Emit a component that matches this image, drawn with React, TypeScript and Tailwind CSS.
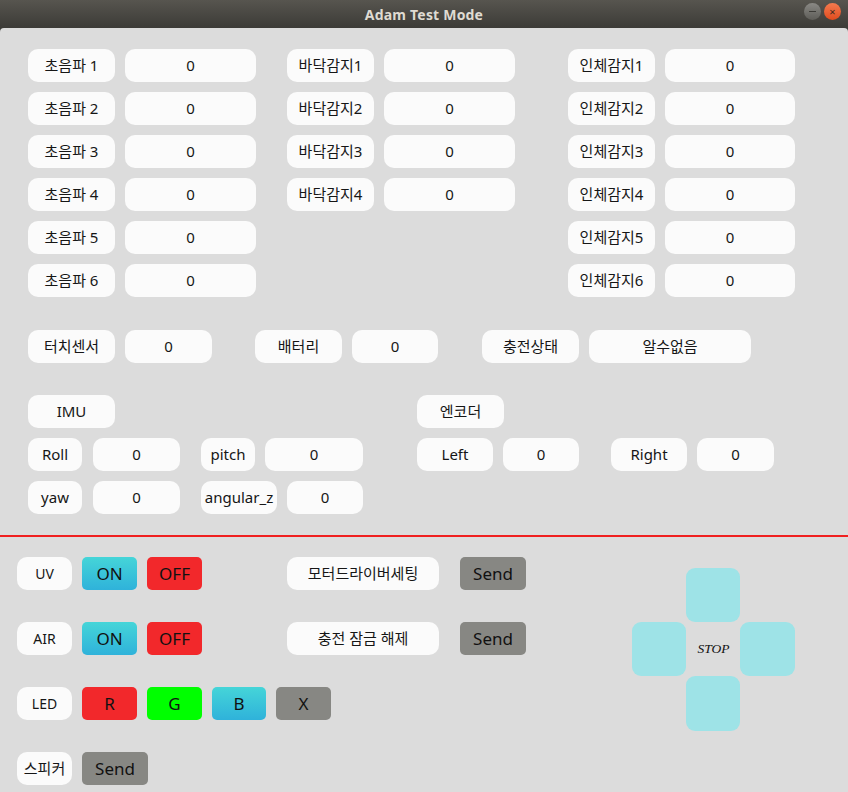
import React from 'react'

const font = { fontFamily: '"Noto Sans", "Noto Sans CJK KR", sans-serif' }

function Box({ w, children, className = '' }: { w: string; children: React.ReactNode; className?: string }) {
  return (
    <div className={`${w} h-[33px] shrink-0 rounded-[10px] bg-[#fbfbfb] flex items-center justify-center text-[15px] text-[#161616] ${className}`}>
      {children}
    </div>
  )
}

function Btn({ w, bg, children }: { w: string; bg: string; children: React.ReactNode }) {
  return (
    <div className={`${w} ${bg} h-[33px] shrink-0 rounded-[5px] flex items-center justify-center text-[17px] text-[#111]`}>
      {children}
    </div>
  )
}

const cyan = 'bg-gradient-to-b from-[#45d5d8] to-[#2fb2da]'
const red = 'bg-[#f2282b]'
const grey = 'bg-[#878783]'

export default function App() {
  const ultra = [1, 2, 3, 4, 5, 6]
  const floor = [1, 2, 3, 4]
  const human = [1, 2, 3, 4, 5, 6]

  return (
    <div className="w-[848px] h-[792px] bg-[#3d3c38] flex flex-col overflow-hidden" style={font}>
      {/* title bar */}
      <div className="h-[28px] shrink-0 relative flex items-center justify-center bg-gradient-to-b from-[#57554f] to-[#3c3b37]">
        <span className="text-[14px] font-bold text-[#dfdbd2] tracking-[0.2px]">Adam Test Mode</span>
        <div className="absolute right-[7px] top-[3px] flex gap-[3px]">
          <div className="w-[17px] h-[17px] rounded-full bg-gradient-to-b from-[#8a8985] to-[#5e5d58] flex items-center justify-center">
            <div className="w-[7px] h-[1.5px] bg-[#3c3b37]" />
          </div>
          <div className="w-[17px] h-[17px] rounded-full bg-gradient-to-b from-[#f47a4e] to-[#df4b1c] flex items-center justify-center text-[11px] leading-none text-[#3c2a20]">
            ×
          </div>
        </div>
      </div>

      <div className="flex-1 bg-[#dcdcdc] rounded-tl-[4px] rounded-tr-[4px] flex flex-col">
        {/* top sensors */}
        <div className="pt-[21px] pl-[28px] flex">
          <div className="flex flex-col gap-[10px] w-[228px]">
            {ultra.map((n) => (
              <div key={n} className="flex gap-[10px]">
                <Box w="w-[87px]">초음파 {n}</Box>
                <Box w="w-[131px]">0</Box>
              </div>
            ))}
          </div>
          <div className="flex flex-col gap-[10px] w-[228px] ml-[31px]">
            {floor.map((n) => (
              <div key={n} className="flex gap-[10px]">
                <Box w="w-[87px]">바닥감지{n}</Box>
                <Box w="w-[131px]">0</Box>
              </div>
            ))}
          </div>
          <div className="flex flex-col gap-[10px] ml-[53px]">
            {human.map((n) => (
              <div key={n} className="flex gap-[10px]">
                <Box w="w-[87px]">인체감지{n}</Box>
                <Box w="w-[130px]">0</Box>
              </div>
            ))}
          </div>
        </div>

        {/* touch / battery / charge */}
        <div className="mt-[33px] pl-[28px] flex">
          <Box w="w-[87px]">터치센서</Box>
          <Box w="w-[87px]" className="ml-[10px]">0</Box>
          <Box w="w-[87px]" className="ml-[43px]">배터리</Box>
          <Box w="w-[86px]" className="ml-[10px]">0</Box>
          <Box w="w-[97px]" className="ml-[44px]">충전상태</Box>
          <Box w="w-[162px]" className="ml-[10px]">알수없음</Box>
        </div>

        {/* IMU / encoder */}
        <div className="mt-[32px] pl-[28px] flex">
          <div className="flex flex-col gap-[10px] w-[335px]">
            <Box w="w-[87px]">IMU</Box>
            <div className="flex">
              <Box w="w-[54px]">Roll</Box>
              <Box w="w-[87px]" className="ml-[11px]">0</Box>
              <Box w="w-[54px]" className="ml-[21px]">pitch</Box>
              <Box w="w-[98px]" className="ml-[10px]">0</Box>
            </div>
            <div className="flex">
              <Box w="w-[54px]">yaw</Box>
              <Box w="w-[87px]" className="ml-[11px]">0</Box>
              <Box w="w-[76px]" className="ml-[21px]">angular_z</Box>
              <Box w="w-[76px]" className="ml-[10px]">0</Box>
            </div>
          </div>
          <div className="flex flex-col gap-[10px] ml-[54px]">
            <Box w="w-[87px]">엔코더</Box>
            <div className="flex">
              <Box w="w-[76px]">Left</Box>
              <Box w="w-[76px]" className="ml-[10px]">0</Box>
              <Box w="w-[76px]" className="ml-[32px]">Right</Box>
              <Box w="w-[77px]" className="ml-[10px]">0</Box>
            </div>
          </div>
        </div>

        <div className="mt-[21px] h-[2px] bg-[#f02020]" />

        {/* controls */}
        <div className="mt-[20px] pl-[17px] flex">
          <div className="flex flex-col gap-[32px] w-[270px]">
            <div className="flex gap-[10px]">
              <Box w="w-[55px]" className="!text-[14px]">UV</Box>
              <Btn w="w-[55px]" bg={cyan}>ON</Btn>
              <Btn w="w-[55px]" bg={red}>OFF</Btn>
            </div>
            <div className="flex gap-[10px]">
              <Box w="w-[55px]" className="!text-[14px]">AIR</Box>
              <Btn w="w-[55px]" bg={cyan}>ON</Btn>
              <Btn w="w-[55px]" bg={red}>OFF</Btn>
            </div>
            <div className="flex gap-[10px]">
              <Box w="w-[55px]" className="!text-[14px]">LED</Box>
              <Btn w="w-[55px]" bg={red}>R</Btn>
              <Btn w="w-[55px]" bg="bg-[#00ff00]">G</Btn>
              <Btn w="w-[54px]" bg={cyan}>B</Btn>
              <Btn w="w-[55px]" bg={grey}>X</Btn>
            </div>
            <div className="flex gap-[10px]">
              <Box w="w-[55px]">스피커</Box>
              <Btn w="w-[66px]" bg={grey}>Send</Btn>
            </div>
          </div>

          <div className="flex flex-col gap-[32px]">
            <div className="flex gap-[21px]">
              <Box w="w-[152px]">모터드라이버세팅</Box>
              <Btn w="w-[66px]" bg={grey}>Send</Btn>
            </div>
            <div className="flex gap-[21px]">
              <Box w="w-[152px]">충전 잠금 해제</Box>
              <Btn w="w-[66px]" bg={grey}>Send</Btn>
            </div>
          </div>

          <div className="ml-[106px] mt-[11px] grid grid-cols-[54px_54px_55px] grid-rows-[54px_54px_55px]">
            <div />
            <div className="rounded-[9px] bg-[#9ee3e7]" />
            <div />
            <div className="rounded-[9px] bg-[#9ee3e7]" />
            <div
              className="flex items-center justify-center pl-[1px] text-[13.5px] italic text-[#111]"
              style={{ fontFamily: '"Liberation Serif", serif' }}
            >
              STOP
            </div>
            <div className="rounded-[9px] bg-[#9ee3e7]" />
            <div />
            <div className="rounded-[9px] bg-[#9ee3e7]" />
            <div />
          </div>
        </div>
      </div>
    </div>
  )
}
